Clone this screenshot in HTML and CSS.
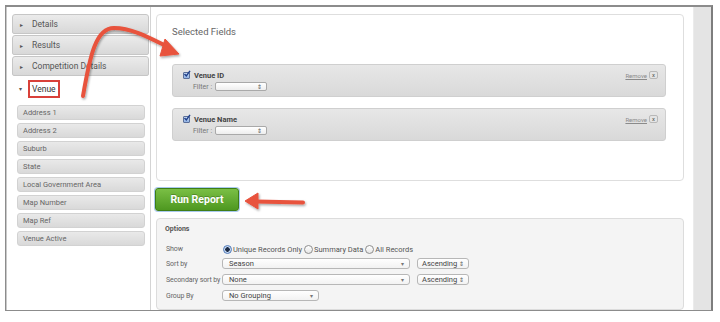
FILE: index.html
```html
<!DOCTYPE html>
<html>
<head>
<meta charset="utf-8">
<link rel="stylesheet" href="styles.css">
</head>
<body>
<div class="frame">
  <aside class="sidebar">
    <div class="acc-head"><span class="tri">&#9656;</span>Details</div>
    <div class="acc-head"><span class="tri">&#9656;</span>Results</div>
    <div class="acc-head"><span class="tri">&#9656;</span>Competition Details</div>
    <div class="acc-open"><span class="tri">&#9662;</span><span class="venue-box">Venue</span></div>
    <div class="field-list">
      <div class="field-item">Address 1</div>
      <div class="field-item">Address 2</div>
      <div class="field-item">Suburb</div>
      <div class="field-item">State</div>
      <div class="field-item">Local Government Area</div>
      <div class="field-item">Map Number</div>
      <div class="field-item">Map Ref</div>
      <div class="field-item">Venue Active</div>
    </div>
  </aside>
  <main class="main">
    <section class="selected">
      <div class="sel-title">Selected Fields</div>
      <div class="fbox">
        <div class="frow">
          <span class="chk"><svg width="8" height="8" viewBox="0 0 8 8"><path d="M1.5 4 L3.3 6 L7 0.8" fill="none" stroke="#1f3f8a" stroke-width="1.4"/></svg></span>
          <span class="fname">Venue ID</span>
          <span class="remove">Remove</span><span class="xbtn">x</span>
        </div>
        <div class="frow filter-row">
          <span class="flabel">Filter :</span><span class="mini-select"><span class="ud">&#8661;</span></span>
        </div>
      </div>
      <div class="fbox second">
        <div class="frow">
          <span class="chk"><svg width="8" height="8" viewBox="0 0 8 8"><path d="M1.5 4 L3.3 6 L7 0.8" fill="none" stroke="#1f3f8a" stroke-width="1.4"/></svg></span>
          <span class="fname">Venue Name</span>
          <span class="remove">Remove</span><span class="xbtn">x</span>
        </div>
        <div class="frow filter-row">
          <span class="flabel">Filter :</span><span class="mini-select"><span class="ud">&#8661;</span></span>
        </div>
      </div>
    </section>
    <div class="btn-wrap"><button class="run">Run Report</button></div>
    <section class="options">
      <div class="opt-title">Options</div>
      <div class="orow r-show">
        <span class="olabel">Show</span>
        <span class="radio on"></span><span class="rtext">Unique Records Only</span>
        <span class="radio"></span><span class="rtext">Summary Data</span>
        <span class="radio"></span><span class="rtext">All Records</span>
      </div>
      <div class="orow">
        <span class="olabel">Sort by</span>
        <span class="sel wide">Season<span class="dd">&#9662;</span></span>
        <span class="sel asc">Ascending<span class="ud2">&#8661;</span></span>
      </div>
      <div class="orow">
        <span class="olabel">Secondary sort by</span>
        <span class="sel wide">None<span class="dd">&#9662;</span></span>
        <span class="sel asc">Ascending<span class="ud2">&#8661;</span></span>
      </div>
      <div class="orow">
        <span class="olabel">Group By</span>
        <span class="sel group">No Grouping<span class="dd">&#9662;</span></span>
      </div>
    </section>
  </main>
  <div class="strip"></div>
</div>
<svg class="annot" width="720" height="322" viewBox="0 0 720 322">
  <defs>
    <filter id="sh" x="-20%" y="-20%" width="140%" height="140%">
      <feDropShadow dx="1" dy="1.5" stdDeviation="1" flood-color="#000" flood-opacity="0.35"/>
    </filter>
  </defs>
  <g filter="url(#sh)" fill="#e8523c" stroke="#e8523c">
    <path d="M83 96 C 90 55 96 28 114 28 C 132 28 150 38 166 46" fill="none" stroke-width="4" stroke-linecap="round"/>
    <polygon points="179,54 165,39 160,56" stroke-width="1" stroke-linejoin="round"/>
    <path d="M303 202.5 L 256 201.5" fill="none" stroke-width="4" stroke-linecap="round"/>
    <polygon points="245,201 258,193 258,209" stroke-width="1" stroke-linejoin="round"/>
  </g>
</svg>
</body>
</html>
```
FILE: styles.css
```css
* { box-sizing: border-box; }
html, body { margin: 0; padding: 0; background: #fff; }
body {
  font-family: Roboto, "Open Sans", Arial, sans-serif;
  width: 720px;
  height: 322px;
  overflow: hidden;
  position: relative;
}
.frame {
  margin: 5px 0 0 5px;
  width: 708px;
  height: 306px;
  border: 1px solid #8c8c8c;
  border-top-width: 2px;
  border-right-width: 2px;
  border-right-color: #7d7d7d;
  display: flex;
  background: #fff;
}
.sidebar {
  width: 145px;
  flex: none;
  border-left: 1px solid #c9c9c9;
  border-right: 1px solid #d4d4d4;
  padding: 7px 1px 0 5px;
}
.acc-head {
  height: 20px;
  margin-bottom: 1px;
  border: 1px solid #c6c6c6;
  border-radius: 3px 3px 2px 2px;
  background: linear-gradient(#ebebeb, #d8d8d8);
  display: flex;
  align-items: center;
  padding-left: 7px;
  font-size: 8.5px;
  color: #555;
}
.tri { font-size: 6px; color: #555; width: 12px; display: inline-block; }
.acc-open {
  height: 23px;
  display: flex;
  align-items: center;
  padding-left: 7px;
  font-size: 8.5px;
  color: #333;
}
.venue-box {
  border: 2px solid #d9413a;
  padding: 2px 2px;
  margin-left: -3px;
  line-height: 10px;
  color: #333;
}
.field-list {
  padding: 5px 4px 0 5px;
  display: flex;
  flex-direction: column;
  gap: 3px;
}
.field-item {
  height: 15px;
  border: 1px solid #d2d2d2;
  border-radius: 3px;
  background: linear-gradient(#e9e9e9, #d9d9d9);
  font-size: 7.5px;
  color: #666;
  display: flex;
  align-items: center;
  padding-left: 5px;
}
.main {
  flex: 1;
  padding: 7px 9px 0 5px;
  display: flex;
  flex-direction: column;
}
.selected {
  height: 167px;
  border: 1px solid #dedede;
  border-radius: 4px;
  background: #fff;
  padding: 12px 17px 0 15px;
}
.sel-title {
  font-size: 9.5px;
  color: #666;
  line-height: 10px;
}
.fbox {
  margin-top: 27px;
  height: 33px;
  border: 1px solid #cfcfcf;
  border-radius: 3px;
  background: linear-gradient(#e7e7e7, #d9d9d9);
  padding: 5px 7px 0 10px;
}
.fbox.second { margin-top: 11px; }
.frow {
  display: flex;
  align-items: center;
  height: 10px;
}
.filter-row { margin-top: 1px; height: 11px; }
.chk {
  width: 7px;
  height: 7px;
  border: 1px solid #5b6f99;
  border-radius: 1px;
  background: linear-gradient(#cfe0f7, #8fb1e3);
  display: inline-flex;
  align-items: center;
  justify-content: center;
  overflow: visible;
}
.chk svg { margin-top: -2px; margin-left: 1px; flex: none; }
.fname {
  margin-left: 4px;
  font-size: 7.5px;
  font-weight: bold;
  color: #444;
}
.remove {
  margin-left: auto;
  font-size: 6px;
  color: #8a8a8a;
  text-decoration: underline;
}
.xbtn {
  margin-left: 2px;
  width: 9px;
  height: 8px;
  border: 1px solid #b8b8b8;
  border-radius: 2px;
  background: #e4e4e4;
  font-size: 6px;
  color: #555;
  display: inline-flex;
  align-items: center;
  justify-content: center;
  line-height: 1;
}
.flabel {
  margin-left: 10px;
  font-size: 7px;
  color: #777;
  width: 22px;
}
.mini-select {
  width: 52px;
  height: 9px;
  border: 1px solid #a9a9a9;
  border-radius: 2px;
  background: linear-gradient(#fff, #eee);
  display: inline-flex;
  justify-content: flex-end;
  align-items: center;
  padding-right: 4px;
}
.ud { font-size: 6px; color: #555; line-height: 1; }
.btn-wrap { margin-top: 7px; height: 23px; display: flex; }
.run {
  width: 84px;
  height: 23px;
  margin-left: -1px;
  border: 1px solid #3e7d16;
  border-radius: 3px;
  background: linear-gradient(#7abf45, #4e9820);
  box-shadow: 0 0 0 1px #a9c9ee;
  color: #fff;
  font-family: Roboto, Arial, sans-serif;
  font-weight: bold;
  font-size: 10.5px;
  text-shadow: 0 -1px 0 rgba(0,0,0,0.25);
  padding: 0;
}
.options {
  margin-top: 7px;
  height: 92px;
  border: 1px solid #dcdcdc;
  border-radius: 4px;
  background: #f4f4f4;
  padding: 5px 0 0 8px;
}
.opt-title {
  font-size: 7px;
  font-weight: bold;
  color: #555;
  line-height: 10px;
}
.orow {
  display: flex;
  align-items: center;
  height: 11px;
  margin-top: 5px;
  font-size: 7.5px;
  color: #666;
  white-space: nowrap;
}
.orow.r-show { margin-top: 9px; height: 12px; margin-bottom: -2px; }
.olabel { width: 57px; flex: none; padding-left: 1px; white-space: nowrap; font-size: 7px; letter-spacing: -0.1px; }
.radio {
  width: 9px;
  height: 9px;
  border-radius: 50%;
  border: 1px solid #8e8e8e;
  background: linear-gradient(#fff, #e6e6e6);
  margin-left: 1px;
  margin-right: 1px;
  flex: none;
  position: relative;
}
.radio.on {
  border-color: #4f79b8;
  background: radial-gradient(circle, #1d2b44 0 2px, #c7daf3 2.5px);
}
.rtext { color: #555; margin-right: 1px; }
.sel {
  height: 11px;
  border: 1px solid #b7b7b7;
  border-radius: 3px;
  background: linear-gradient(#fff, #f2f2f2);
  display: inline-flex;
  align-items: center;
  padding-left: 6px;
  color: #444;
  position: relative;
  flex: none;
}
.sel.wide { width: 188px; }
.sel.asc { width: 52px; margin-left: 7px; padding-left: 4px; }
.sel.group { width: 97px; }
.dd { margin-left: auto; margin-right: 5px; font-size: 6px; color: #777; }
.ud2 { margin-left: auto; margin-right: 4px; font-size: 6px; color: #555; }
.strip {
  width: 18px;
  flex: none;
  background: #e4e4e4;
  border-left: 1px solid #ebebeb;
}
.annot {
  position: absolute;
  left: 0;
  top: 0;
  pointer-events: none;
}
```
